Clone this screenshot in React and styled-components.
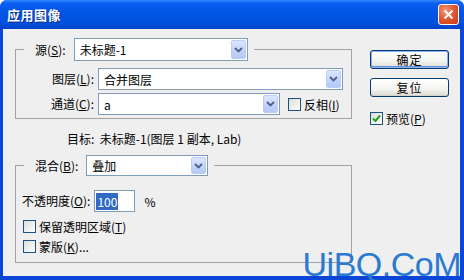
import React from 'react'
import styled, { createGlobalStyle } from 'styled-components'

const Global = createGlobalStyle`
    html, body { margin: 0; padding: 0; background: #ffffff; }
    body { font-family: "Noto Sans CJK SC", "Noto Sans", sans-serif; font-size: 12px; color: #000; }
`;

const Window = styled.div`
    position: relative;
    width: 464px;
    height: 280px;
    display: flex;
    flex-direction: column;
    background: #0a46d8;
    border-radius: 7px 7px 0 0;
    overflow: hidden;
`;

const TitleBar = styled.div`
    height: 29px;
    flex: none;
    display: flex;
    align-items: center;
    justify-content: space-between;
    padding: 0 5px 0 7px;
    background: linear-gradient(#2f86ff 0%, #0a5df0 12%, #0055e5 45%, #0150dc 80%, #0142c8 100%);
`;

const Title = styled.span`
    color: #fff;
    font-weight: bold;
    font-size: 13px;
    text-shadow: 1px 1px 0 #0a2a8a;
    letter-spacing: 0.5px;
`;

const CloseButton = styled.div`
    width: 19px;
    height: 19px;
    border: 1px solid #fff;
    border-radius: 3px;
    background: radial-gradient(circle at 35% 30%, #f49a7a 0%, #e35a33 45%, #c8381a 100%);
    display: flex;
    align-items: center;
    justify-content: center;
`;

const Body = styled.div`
    flex: 1;
    margin: 0 4px 4px 3px;
    background: #efefef;
    display: flex;
    padding: 9px 0 0 12px;
`;

const LeftCol = styled.div`
    width: 337px;
    display: flex;
    flex-direction: column;
`;

const RightCol = styled.div`
    margin-left: 18px;
    padding-top: 12px;
    display: flex;
    flex-direction: column;
`;

const Group = styled.fieldset`
    margin: 0;
    padding: 0 0 ${({ pb }) => pb}px 0;
    border: 1px solid #a3a3a3;
    min-width: 0;
`;

const Legend = styled.legend`
    margin-left: 8px;
    padding: 0 6px 0 11px;
    display: flex;
    align-items: center;
    gap: 4px;
`;

const Row = styled.div`
    display: flex;
    align-items: center;
    height: 22px;
    margin-top: ${({ mt }) => mt || 0}px;
    padding-left: ${({ pl }) => pl || 0}px;
`;

const Label = styled.span`
    width: ${({ w }) => (w ? `${w}px` : 'auto')};
    text-align: right;
    white-space: nowrap;
    margin-right: 4px;
    line-height: 16px;
`;

const Combo = styled.div`
    position: relative;
    box-sizing: border-box;
    width: ${({ w }) => w}px;
    height: ${({ h }) => h || 22}px;
    background: #fff;
    border: 1px solid #7f9db9;
    display: flex;
    align-items: center;
    padding-left: 5px;
    font-size: 12px;
`;

const DropBtn = styled.div`
    position: absolute;
    right: 1px;
    top: 1px;
    bottom: 1px;
    width: 15px;
    box-sizing: border-box;
    border: 1px solid #b9cdf6;
    border-radius: 2px;
    background: linear-gradient(#dce7fd, #c1d3fb 60%, #b4c9f7);
    display: flex;
    align-items: center;
    justify-content: center;
`;

const Box = styled.span`
    box-sizing: border-box;
    width: 13px;
    height: 13px;
    border: 1px solid #1c5180;
    background: linear-gradient(135deg, #dcdcd7, #ffffff);
    display: inline-flex;
    align-items: center;
    justify-content: center;
    flex: none;
`;

const CheckRow = styled.div`
    display: flex;
    align-items: center;
    height: 16px;
    gap: 3px;
    margin-top: ${({ mt }) => mt || 0}px;
    margin-left: ${({ ml }) => ml || 0}px;
    padding-left: ${({ pl }) => pl || 0}px;
    white-space: nowrap;
`;

const TargetText = styled.div`
    margin-top: 12px;
    padding-left: 52px;
    line-height: 16px;
    height: 16px;
`;

const Spacer = styled.div`
    height: ${({ h }) => h}px;
`;

const TextField = styled.div`
    box-sizing: border-box;
    width: 41px;
    height: 22px;
    background: #fff;
    border: 1px solid #7f9db9;
    display: flex;
    align-items: center;
    padding-left: 1px;
`;

const Selected = styled.span`
    background: #316ac5;
    color: #fff;
    padding: 0 1px;
    line-height: 17px;
`;

const Percent = styled.span`
    margin-left: 9px;
`;

const Button = styled.div`
    box-sizing: border-box;
    width: 79px;
    height: 19px;
    margin-top: ${({ mt }) => mt || 0}px;
    border: 1px solid #003c74;
    border-radius: 3px;
    background: linear-gradient(#ffffff, #f3f3ef 60%, #dcdcd4);
    box-shadow: ${({ primary }) => (primary ? 'inset 0 0 0 1px #8eb2f0, inset 0 -1px 0 1px #6b90dc' : 'inset 0 -1px 0 #d6d0c5')};
    display: flex;
    align-items: center;
    justify-content: center;
    letter-spacing: 1px;
`;

const Watermark = styled.div`
    position: absolute;
    right: 3px;
    bottom: 0;
    font-family: "Liberation Sans", Arial, sans-serif;
    font-size: 34px;
    letter-spacing: -0.5px;
    color: #2b7ad2;
    line-height: 32px;
`;

const Chevron = () => (
    <svg width="9" height="6" viewBox="0 0 9 6">
        <polyline points="1,1 4.5,4.5 8,1" fill="none" stroke="#4d6185" strokeWidth="1.8" />
    </svg>
);

const Check = () => (
    <svg width="9" height="9" viewBox="0 0 9 9">
        <polyline points="1,4.5 3.5,7 8,1.5" fill="none" stroke="#21a121" strokeWidth="2" />
    </svg>
);

const ComboBox = ({ w, h, children }) => (
    <Combo w={w} h={h}>
        {children}
        <DropBtn><Chevron /></DropBtn>
    </Combo>
);

const CheckBox = ({ checked, children, ...rest }) => (
    <CheckRow {...rest}>
        <Box>{checked && <Check />}</Box>
        <span>{children}</span>
    </CheckRow>
);

const App = () => (
    <>
        <Global />
        <Window>
            <TitleBar>
                <Title>应用图像</Title>
                <CloseButton>
                    <svg width="11" height="11" viewBox="0 0 11 11">
                        <path d="M1.5 1.5 L9.5 9.5 M9.5 1.5 L1.5 9.5" stroke="#fff" strokeWidth="2" />
                    </svg>
                </CloseButton>
            </TitleBar>
            <Body>
                <LeftCol>
                    <Group pb={3}>
                        <Legend>
                            <Label>源(<u>S</u>):</Label>
                            <ComboBox w={174} h={23}>未标题-1</ComboBox>
                        </Legend>
                        <Row mt={7}>
                            <Label w={78}>图层(<u>L</u>):</Label>
                            <ComboBox w={245}>合并图层</ComboBox>
                        </Row>
                        <Row mt={3}>
                            <Label w={78}>通道(<u>C</u>):</Label>
                            <ComboBox w={182}>a</ComboBox>
                            <CheckBox ml={8}>反相(<u>I</u>)</CheckBox>
                        </Row>
                    </Group>
                    <TargetText>目标:&nbsp; 未标题-1(图层 1 副本, Lab)</TargetText>
                    <Spacer h={8} />
                    <Group pb={8}>
                        <Legend>
                            <Label>混合(<u>B</u>):</Label>
                            <ComboBox w={122} h={21}>叠加</ComboBox>
                        </Legend>
                        <Row mt={14} pl={6}>
                            <Label>不透明度(<u>O</u>):</Label>
                            <TextField><Selected>100</Selected></TextField>
                            <Percent>%</Percent>
                        </Row>
                        <CheckBox mt={6} pl={7}>保留透明区域(<u>T</u>)</CheckBox>
                        <CheckBox mt={4} pl={7}>蒙版(<u>K</u>)...</CheckBox>
                    </Group>
                </LeftCol>
                <RightCol>
                    <Button primary>确定</Button>
                    <Button mt={9}>复位</Button>
                    <CheckBox checked mt={13}>预览(<u>P</u>)</CheckBox>
                </RightCol>
            </Body>
            <Watermark>UiBQ.CoM</Watermark>
        </Window>
    </>
);

export default App
